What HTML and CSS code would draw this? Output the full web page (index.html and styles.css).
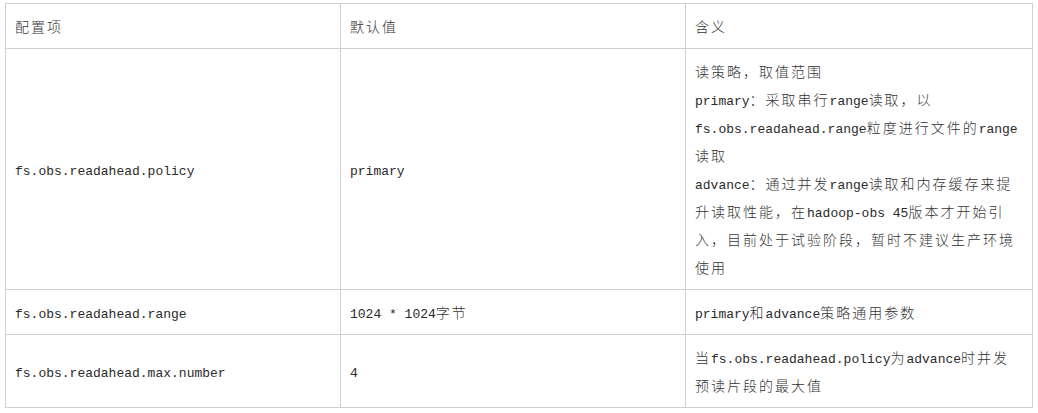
FILE: index.html
```html
<!DOCTYPE html>
<html lang="zh-CN">
<head>
<meta charset="utf-8">
<title>配置项</title>
<link rel="stylesheet" href="styles.css">
</head>
<body>
<div class="wrap">
<table class="cfg">
  <colgroup>
    <col class="c1">
    <col class="c2">
    <col class="c3">
  </colgroup>
  <tr>
    <td>配置项</td>
    <td>默认值</td>
    <td>含义</td>
  </tr>
  <tr>
    <td><span class="m">fs.obs.readahead.policy</span></td>
    <td><span class="m">primary</span></td>
    <td>读策略，取值范围<br><span class="m">primary</span>：采取串行<span class="m">range</span>读取，以<br><span class="m">fs.obs.readahead.range</span>粒度进行文件的<span class="m">range</span><br>读取<br><span class="m">advance</span>：通过并发<span class="m">range</span>读取和内存缓存来提<br>升读取性能，在<span class="m">hadoop-obs 45</span>版本才开始引<br>入，目前处于试验阶段，暂时不建议生产环境<br>使用</td>
  </tr>
  <tr>
    <td><span class="m">fs.obs.readahead.range</span></td>
    <td><span class="m">1024 * 1024</span>字节</td>
    <td><span class="m">primary</span>和<span class="m">advance</span>策略通用参数</td>
  </tr>
  <tr>
    <td><span class="m">fs.obs.readahead.max.number</span></td>
    <td><span class="m">4</span></td>
    <td>当<span class="m">fs.obs.readahead.policy</span>为<span class="m">advance</span>时并发<br>预读片段的最大值</td>
  </tr>
</table>
</div>
</body>
</html>
```

FILE: styles.css
```css
html, body {
  margin: 0;
  padding: 0;
  background: #ffffff;
}

.wrap {
  padding: 3px 0 0 5px;
}

.cfg {
  border-collapse: collapse;
  table-layout: fixed;
  width: 1027px;
  font-family: "Noto Sans CJK SC", "Liberation Sans", sans-serif;
  font-size: 14px;
  font-weight: 300;
  letter-spacing: 2px;
  color: #333333;
}

.c1 { width: 335px; }
.c2 { width: 345px; }
.c3 { width: 347px; }

.cfg td {
  border: 1px solid #d0d0d0;
  padding: 8px 9px;
  height: 28px;
  line-height: 28px;
  vertical-align: middle;
  white-space: nowrap;
  overflow: hidden;
}

.m {
  font-family: "Liberation Mono", "DejaVu Sans Mono", monospace;
  font-size: 13px;
  font-weight: 400;
  line-height: 1;
  letter-spacing: 0;
  color: #2a2a2a;
}
```
